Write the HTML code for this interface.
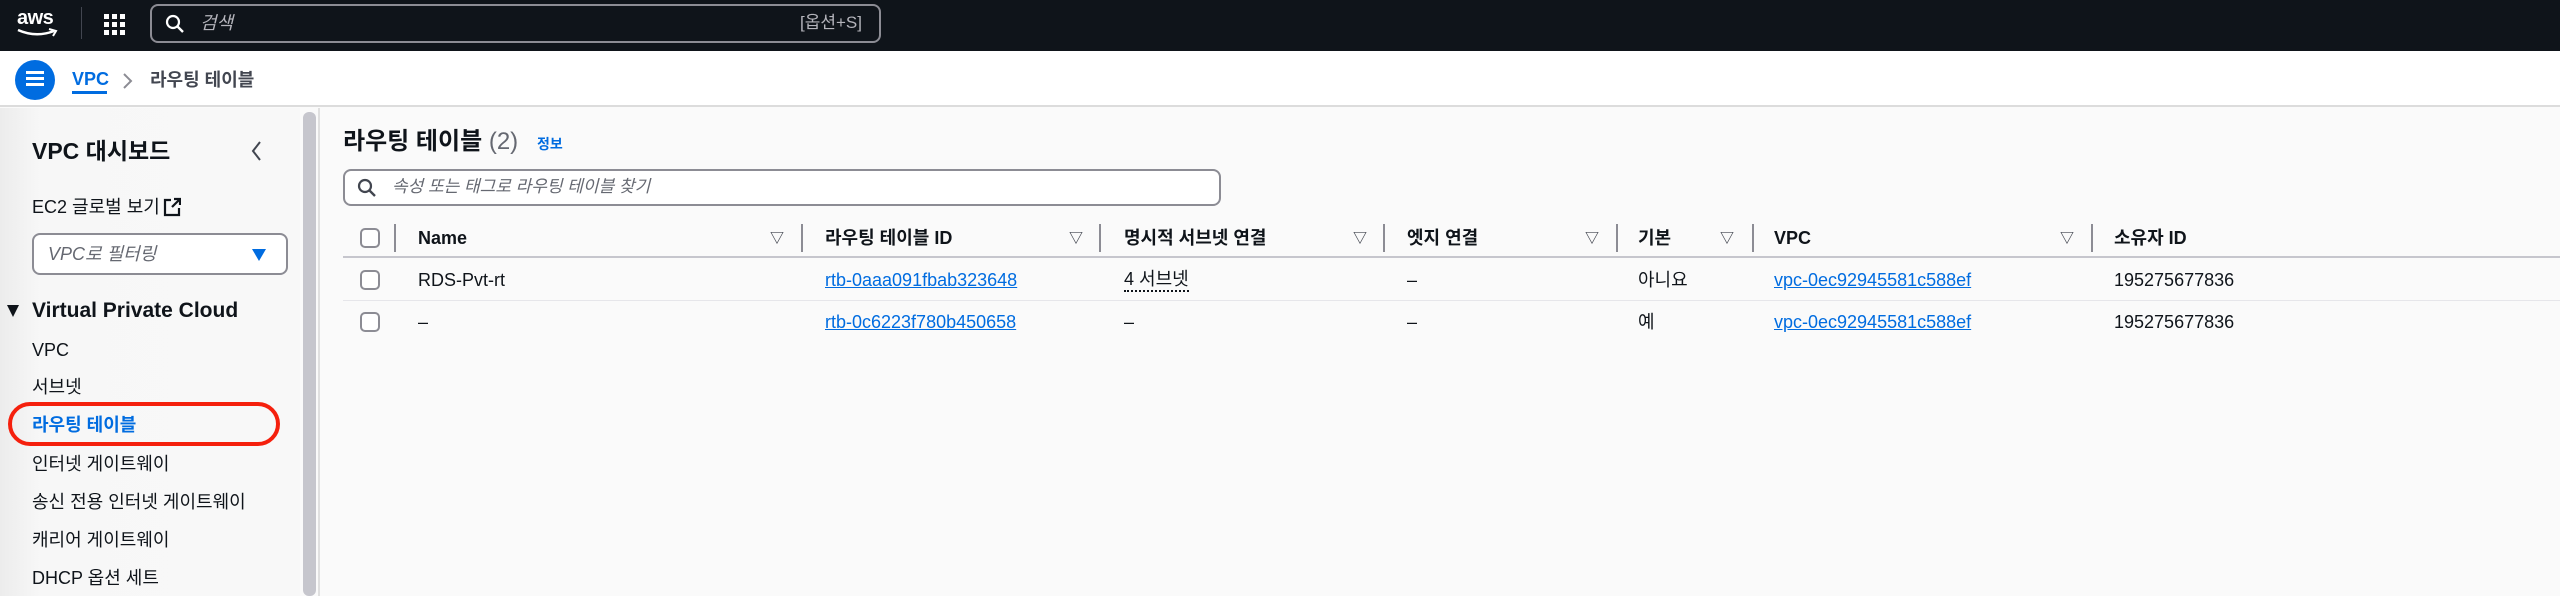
<!DOCTYPE html>
<html><head><meta charset="utf-8"><style>
*{margin:0;padding:0;box-sizing:border-box}
body{width:2560px;height:596px;overflow:hidden;background:#fafafa;font-family:"Liberation Sans","Noto Sans CJK KR",sans-serif;color:#0f141a;position:relative;font-size:18px}
.a{position:absolute;white-space:nowrap;line-height:24px}
.top{left:0;top:0;width:2560px;height:51px;background:#0f141a}
.bc{left:0;top:51px;width:2560px;height:56px;background:#fff;border-bottom:2px solid #dcdcdc}
.side{left:0;top:108px;width:300px;height:488px;background:linear-gradient(90deg,#ececec,#f7f7f7 40px,#f8f8f8)}
.link{color:#006ce0;text-decoration:underline}
.cb{width:20px;height:20px;border:2px solid #8c8c94;border-radius:5px;background:#fff}
.sep{width:2px;height:28px;background:#8c8c94}
.flt{font-size:14px;color:#424650;font-weight:bold}
.th{font-weight:bold;font-size:18px;color:#0f141a}
</style></head><body>
<div class="a top"></div>
<div class="a" style="left:17px;top:6px;color:#fff;font-size:20px;font-weight:bold;letter-spacing:-0.5px">aws</div>
<svg class="a" style="left:16px;top:28px" width="44" height="10"><path d="M2 2 Q20 10 38 3" stroke="#fff" stroke-width="2.5" fill="none"/><path d="M33 1 L40 3 L37 8" stroke="#fff" stroke-width="2" fill="none"/></svg>
<div class="a" style="left:81px;top:7px;width:1px;height:32px;background:#424650"></div>
<svg class="a" style="left:103px;top:13px" width="24" height="24" fill="#fff"><rect x="1" y="1" width="5" height="5"/><rect x="9" y="1" width="5" height="5"/><rect x="17" y="1" width="5" height="5"/><rect x="1" y="9" width="5" height="5"/><rect x="9" y="9" width="5" height="5"/><rect x="17" y="9" width="5" height="5"/><rect x="1" y="17" width="5" height="5"/><rect x="9" y="17" width="5" height="5"/><rect x="17" y="17" width="5" height="5"/></svg>
<div class="a" style="left:150px;top:4px;width:731px;height:39px;border:2px solid #8c8c94;border-radius:8px"></div>
<svg class="a" style="left:165px;top:14px" width="20" height="20"><circle cx="8" cy="8" r="6" stroke="#fff" stroke-width="2.2" fill="none"/><path d="M12.5 12.5 L18 18" stroke="#fff" stroke-width="2.4"/></svg>
<div class="a" style="left:200px;top:11px;color:#b4b4bb;font-style:italic;font-size:18px">검색</div>
<div class="a" style="left:800px;top:11px;color:#b4b4bb;font-size:17px">[옵션+S]</div>

<div class="a bc"></div>
<div class="a" style="left:15px;top:60px;width:40px;height:40px;border-radius:50%;background:#006ce0"></div>
<div class="a" style="left:26px;top:71px;width:18px;height:3px;background:#fff;box-shadow:0 6px 0 #fff,0 12px 0 #fff"></div>
<div class="a" style="left:72px;top:67px;color:#006ce0;font-size:18px;font-weight:bold">VPC</div>
<div class="a" style="left:72px;top:91px;width:35px;height:3px;background:#006ce0"></div>
<svg class="a" style="left:122px;top:72px" width="12" height="18"><path d="M2 2 L9 9 L2 16" stroke="#8c8c94" stroke-width="2" fill="none"/></svg>
<div class="a" style="left:150px;top:68px;color:#424650;font-size:18px;font-weight:bold">라우팅 테이블</div>

<div class="a side"></div>
<div class="a" style="left:303px;top:112px;width:13px;height:484px;background:#c6c6cd;border-radius:6px"></div>
<div class="a" style="left:318px;top:108px;width:2px;height:488px;background:#e0e0e0"></div>
<div class="a" style="left:32px;top:139px;font-size:23px;font-weight:bold">VPC 대시보드</div>
<svg class="a" style="left:250px;top:140px" width="14" height="22"><path d="M10 2 L3 11 L10 20" stroke="#424650" stroke-width="2" fill="none"/></svg>
<div class="a" style="left:32px;top:195px;font-size:18px;color:#0f141a">EC2 글로벌 보기</div>
<svg class="a" style="left:163px;top:197px" width="18" height="20"><path d="M8 3 H2 V18 H16 V11" stroke="#0f141a" stroke-width="2.2" fill="none"/><path d="M9 10 L16 3 M11 2 H17 V8" stroke="#0f141a" stroke-width="2.2" fill="none"/></svg>
<div class="a" style="left:32px;top:233px;width:256px;height:42px;border:2px solid #8c8c94;border-radius:8px;background:#fff"></div>
<div class="a" style="left:48px;top:242px;font-style:italic;color:#656871;font-size:18px">VPC로 필터링</div>
<svg class="a" style="left:251px;top:248px" width="16" height="14"><path d="M1 1 H15 L8 13 Z" fill="#006ce0"/></svg>
<svg class="a" style="left:6px;top:304px" width="14" height="14"><path d="M1 1 H13 L7 13 Z" fill="#0f141a"/></svg>
<div class="a" style="left:32px;top:299px;font-size:21px;font-weight:bold">Virtual Private Cloud</div>
<div class="a" style="left:32px;top:338px">VPC</div>
<div class="a" style="left:32px;top:375px">서브넷</div>
<div class="a" style="left:32px;top:413px;color:#006ce0;font-weight:bold">라우팅 테이블</div>
<div class="a" style="left:8px;top:402px;width:272px;height:44px;border:4px solid #f5200d;border-radius:22px"></div>
<div class="a" style="left:32px;top:452px">인터넷 게이트웨이</div>
<div class="a" style="left:32px;top:490px">송신 전용 인터넷 게이트웨이</div>
<div class="a" style="left:32px;top:528px">캐리어 게이트웨이</div>
<div class="a" style="left:32px;top:566px">DHCP 옵션 세트</div>

<div class="a" style="left:343px;top:130px;font-size:24px;font-weight:bold">라우팅 테이블 <span style="font-weight:normal;color:#656871">(2)</span></div>
<div class="a" style="left:537px;top:132px;color:#006ce0;font-size:14px;font-weight:bold">정보</div>
<div class="a" style="left:343px;top:169px;width:878px;height:37px;border:2px solid #8c8c94;border-radius:8px;background:#fff"></div>
<svg class="a" style="left:357px;top:178px" width="20" height="20"><circle cx="8" cy="8" r="6" stroke="#424650" stroke-width="2.2" fill="none"/><path d="M12.5 12.5 L18 18" stroke="#424650" stroke-width="2.4"/></svg>
<div class="a" style="left:392px;top:175px;font-style:italic;color:#656871;font-size:17px">속성 또는 태그로 라우팅 테이블 찾기</div>

<div class="a" style="left:343px;top:256px;width:2217px;height:2px;background:#c6c6cd"></div>
<div class="a" style="left:343px;top:300px;width:2217px;height:1px;background:#e6e6ea"></div>
<div class="a cb" style="left:360px;top:228px"></div>
<div class="a cb" style="left:360px;top:270px"></div>
<div class="a cb" style="left:360px;top:312px"></div>
<div class="a sep" style="left:394px;top:224px"></div>
<div class="a sep" style="left:801px;top:224px"></div>
<div class="a sep" style="left:1099px;top:224px"></div>
<div class="a sep" style="left:1383px;top:224px"></div>
<div class="a sep" style="left:1616px;top:224px"></div>
<div class="a sep" style="left:1752px;top:224px"></div>
<div class="a sep" style="left:2091px;top:224px"></div>
<div class="a flt" style="left:770px;top:226px">▽</div>
<div class="a flt" style="left:1069px;top:226px">▽</div>
<div class="a flt" style="left:1353px;top:226px">▽</div>
<div class="a flt" style="left:1585px;top:226px">▽</div>
<div class="a flt" style="left:1720px;top:226px">▽</div>
<div class="a flt" style="left:2060px;top:226px">▽</div>
<div class="a th" style="left:418px;top:226px">Name</div>
<div class="a th" style="left:825px;top:226px">라우팅 테이블 ID</div>
<div class="a th" style="left:1124px;top:226px">명시적 서브넷 연결</div>
<div class="a th" style="left:1407px;top:226px">엣지 연결</div>
<div class="a th" style="left:1638px;top:226px">기본</div>
<div class="a th" style="left:1774px;top:226px">VPC</div>
<div class="a th" style="left:2114px;top:226px">소유자 ID</div>

<div class="a" style="left:418px;top:268px">RDS-Pvt-rt</div>
<div class="a link" style="left:825px;top:268px">rtb-0aaa091fbab323648</div>
<div class="a" style="left:1124px;top:268px;border-bottom:2px dotted #0f141a;line-height:22px">4 서브넷</div>
<div class="a" style="left:1407px;top:268px">–</div>
<div class="a" style="left:1638px;top:268px">아니요</div>
<div class="a link" style="left:1774px;top:268px">vpc-0ec92945581c588ef</div>
<div class="a" style="left:2114px;top:268px">195275677836</div>

<div class="a" style="left:418px;top:310px">–</div>
<div class="a link" style="left:825px;top:310px">rtb-0c6223f780b450658</div>
<div class="a" style="left:1124px;top:310px">–</div>
<div class="a" style="left:1407px;top:310px">–</div>
<div class="a" style="left:1638px;top:310px">예</div>
<div class="a link" style="left:1774px;top:310px">vpc-0ec92945581c588ef</div>
<div class="a" style="left:2114px;top:310px">195275677836</div>
</body></html>
